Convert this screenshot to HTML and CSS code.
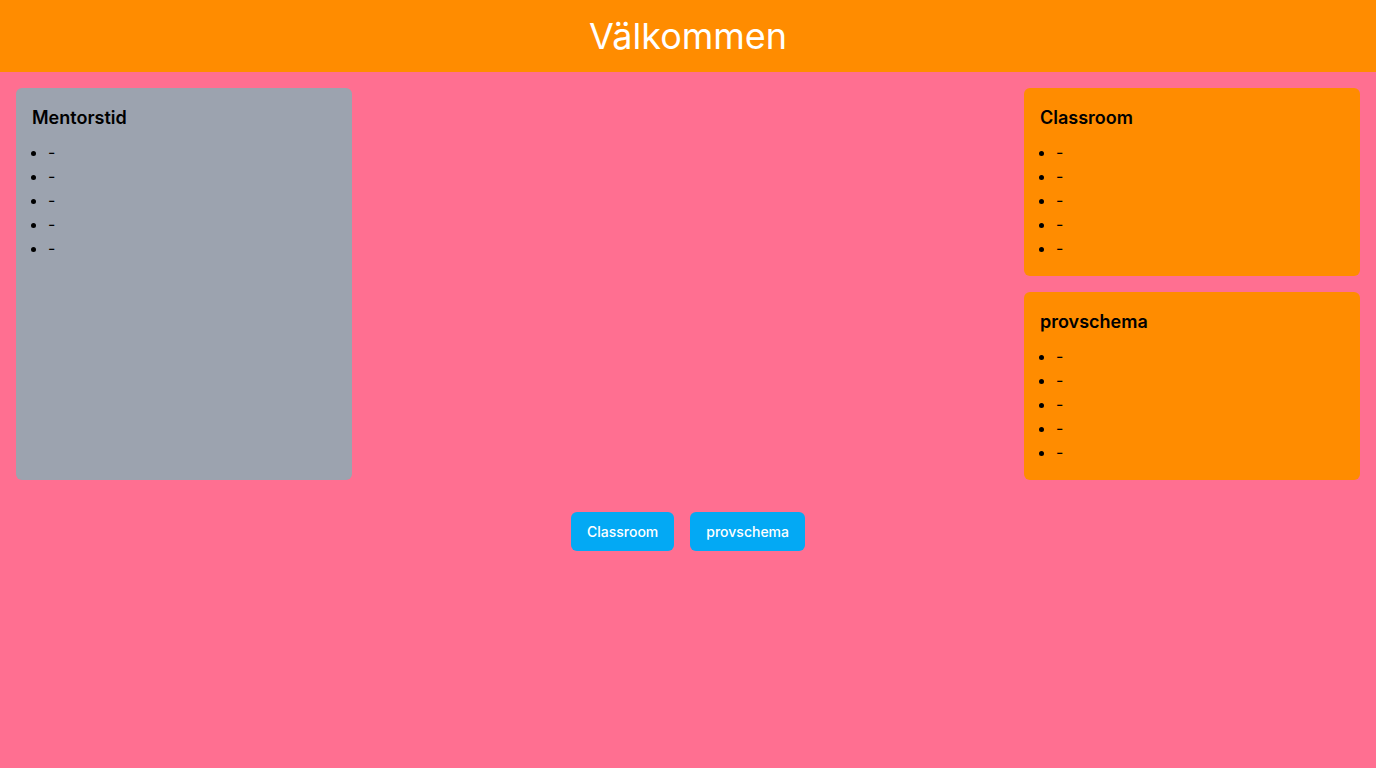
FILE: index.html
```html
<!DOCTYPE html>
<html lang="sv">
<head>
<meta charset="utf-8">
<title>Välkommen</title>
<link rel="stylesheet" href="styles.css">
</head>
<body>
<header class="topbar"><h1 class="title">Välkommen</h1></header>
<main class="content">
  <div class="grid">
    <section class="card card-gray card-tall">
      <h2 class="card-title">Mentorstid</h2>
      <ul class="card-list"><li>-</li><li>-</li><li>-</li><li>-</li><li>-</li></ul>
    </section>
    <div class="spacer"></div>
    <div class="side">
      <section class="card card-orange">
        <h2 class="card-title">Classroom</h2>
        <ul class="card-list"><li>-</li><li>-</li><li>-</li><li>-</li><li>-</li></ul>
      </section>
      <section class="card card-orange">
        <h2 class="card-title">provschema</h2>
        <ul class="card-list"><li>-</li><li>-</li><li>-</li><li>-</li><li>-</li></ul>
      </section>
    </div>
  </div>
  <div class="actions">
    <button class="btn">Classroom</button>
    <button class="btn">provschema</button>
  </div>
</main>
</body>
</html>
```
FILE: styles.css
```css
* { box-sizing: border-box; }
html, body { margin: 0; padding: 0; }
body {
  font-family: Inter, "Noto Sans", sans-serif;
  background: #FF6F91;
  min-height: 768px;
  color: #000;
}
.topbar {
  background: #FF8C00;
  height: 72px;
  display: flex;
  align-items: center;
  justify-content: center;
}
.title {
  margin: 0;
  font-size: 36px;
  line-height: 40px;
  font-weight: 400;
  color: #fff;
}
.content { padding: 16px; }
.grid {
  display: grid;
  grid-template-columns: 336px 1fr 336px;
  align-items: stretch;
}
.side {
  display: flex;
  flex-direction: column;
  gap: 16px;
}
.card {
  border-radius: 6px;
  padding: 16px;
}
.card-gray { background: #9CA3AF; }
.card-orange { background: #FF8C00; }
.card-title {
  margin: 0 0 8px;
  font-size: 18px;
  line-height: 28px;
  font-weight: 600;
}
.card-list {
  margin: 0;
  padding-left: 16px;
  font-size: 16px;
  line-height: 24px;
}
.actions {
  margin-top: 32px;
  display: flex;
  justify-content: center;
  gap: 16px;
}
.btn {
  font-family: Inter, "Noto Sans", sans-serif;
  background: #03A9F4;
  color: #fff;
  border: 0;
  border-radius: 6px;
  font-size: 14px;
  line-height: 20px;
  padding: 10px 16px 9px;
  font-weight: 500;
}
```
